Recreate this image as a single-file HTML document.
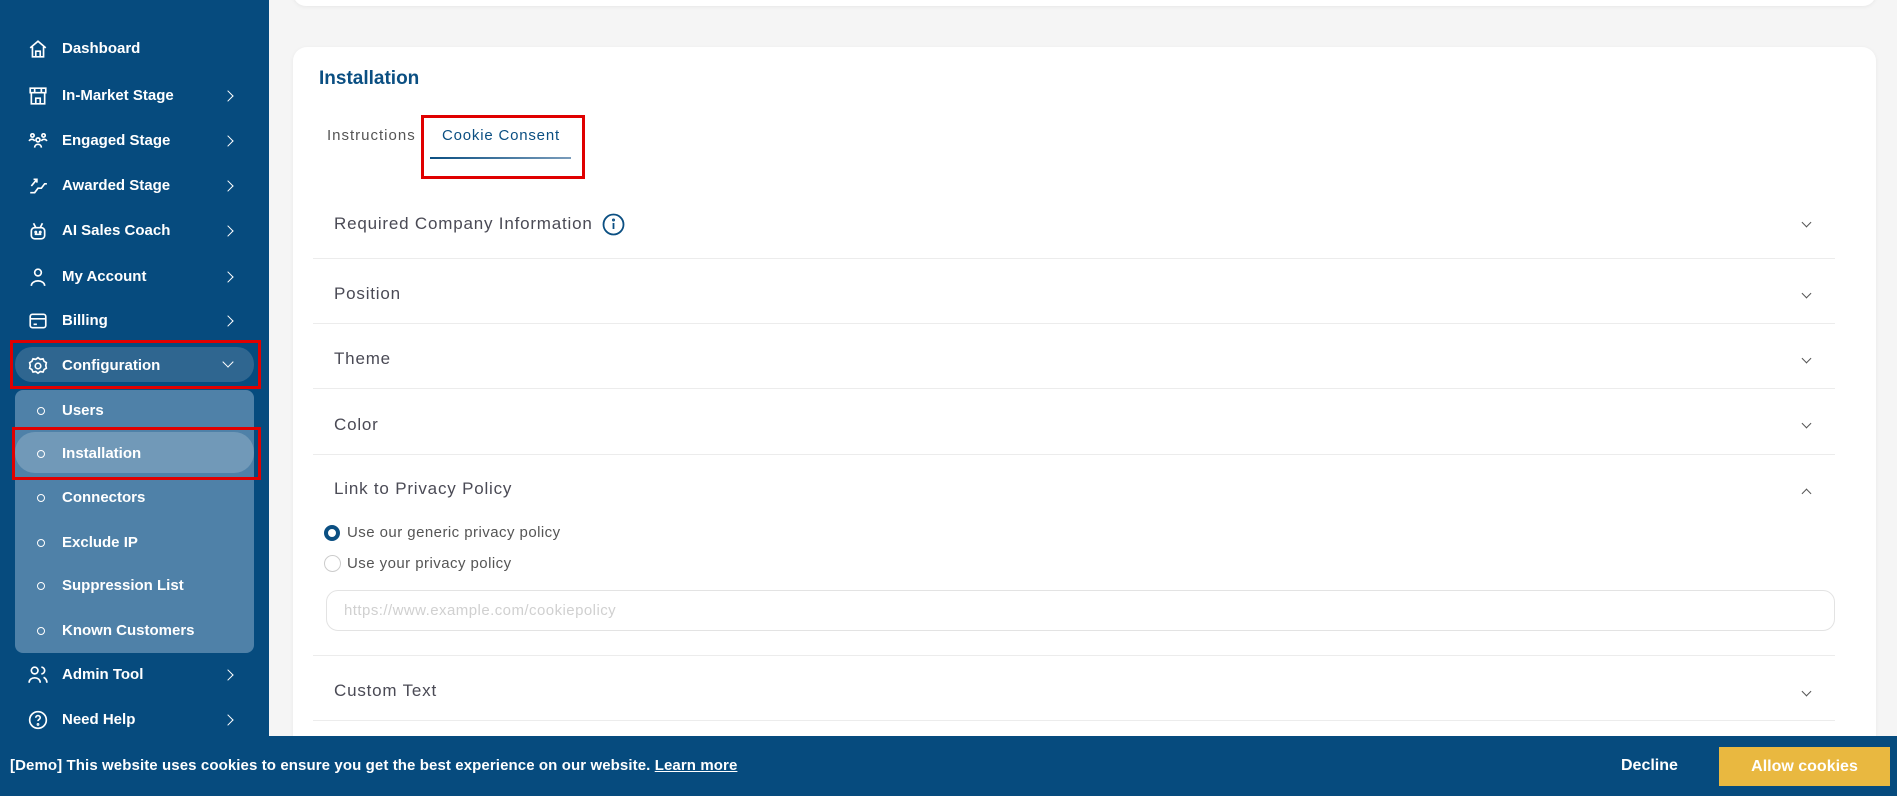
<!DOCTYPE html>
<html><head><meta charset="utf-8"><style>
*{box-sizing:border-box;margin:0;padding:0}
body{width:1897px;height:796px;overflow:hidden;background:#f5f5f5;font-family:"Liberation Sans",sans-serif;position:relative}
.sb{position:absolute;left:0;top:0;width:269px;height:736px;background:#064b7e}
.it{position:absolute;left:0;width:269px;height:30px;color:#fff;font-size:15px;font-weight:bold;line-height:30px}
.it .ic{position:absolute;left:28px;top:5px;width:20px;height:20px}
.it .tx{position:absolute;left:62px}
.it .ch{position:absolute;left:224px;top:11px;width:8px;height:8px;border-right:1.5px solid #fff;border-top:1.5px solid #fff;transform:rotate(45deg)}
.sub{position:absolute;left:15px;top:390px;width:239px;height:263px;background:#4f81a8;border-radius:8px}
.si{position:absolute;left:0;width:269px;height:30px;line-height:30px;color:#fff;font-size:15px;font-weight:bold}
.si .dot{position:absolute;left:37px;top:11px;width:8px;height:8px;border:1.5px solid #fff;border-radius:50%}
.si .tx{position:absolute;left:62px}
.red{position:absolute;border:3px solid #e00000}
.card{position:absolute;background:#fff;border-radius:14px;box-shadow:0 1px 4px rgba(0,0,0,.06)}
.row{position:absolute;left:334px;font-size:17px;color:#4a4a55;letter-spacing:.8px}
.line{position:absolute;left:313px;width:1522px;height:1px;background:#ececec}
.chev{position:absolute;left:1803px;width:7px;height:7px;border-right:1.3px solid #555;border-bottom:1.3px solid #555;transform:rotate(45deg)}
svg{stroke:#fff;fill:none;stroke-width:1.5}
</style></head><body>
<div class="card" style="left:293px;top:-20px;width:1583px;height:26px"></div>
<div class="sb">
<div class="it" style="top:34px"><svg class="ic" viewBox="0 0 18 18"><path d="M2 8L9 2l7 6M4 7v9h10V7M7 16v-5h4v5"/></svg><span class="tx">Dashboard</span></div>
<div class="it" style="top:81px"><svg class="ic" viewBox="0 0 18 18"><path d="M2 2h14v4H2zM3 6v10h12V6M7 16v-5h4v5M6 2v4M12 2v4"/></svg><span class="tx">In-Market Stage</span><span class="ch"></span></div>
<div class="it" style="top:126px"><svg class="ic" viewBox="0 0 18 18"><circle cx="4" cy="4" r="1.5"/><circle cx="14" cy="4" r="1.5"/><circle cx="9" cy="8" r="1.8"/><path d="M1 9c1-2 4-2 5 0M12 9c1-2 4-2 5 0M6 15c0-4 6-4 6 0"/></svg><span class="tx">Engaged Stage</span><span class="ch"></span></div>
<div class="it" style="top:171px"><svg class="ic" viewBox="0 0 18 18"><path d="M2 15h4l3-4h3l3-4h2M3 9l5-6M5 3h3v3"/></svg><span class="tx">Awarded Stage</span><span class="ch"></span></div>
<div class="it" style="top:216px"><svg class="ic" viewBox="0 0 18 18"><rect x="3" y="6" width="12" height="10" rx="3"/><path d="M5 2l2 4M13 2l-2 4M6 12h6"/><circle cx="7" cy="10" r=".6"/><circle cx="11" cy="10" r=".6"/></svg><span class="tx">AI Sales Coach</span><span class="ch"></span></div>
<div class="it" style="top:262px"><svg class="ic" viewBox="0 0 18 18"><circle cx="9" cy="5" r="3"/><path d="M3 17c0-6 12-6 12 0"/></svg><span class="tx">My Account</span><span class="ch"></span></div>
<div class="it" style="top:306px"><svg class="ic" viewBox="0 0 18 18"><rect x="2" y="3" width="14" height="12" rx="2"/><path d="M2 7h14M5 12h3"/></svg><span class="tx">Billing</span><span class="ch"></span></div>
<div style="position:absolute;left:15px;top:347px;width:239px;height:35px;background:#2f6690;border-radius:17px"></div>
<div class="it" style="top:351px"><svg class="ic" viewBox="0 0 18 18"><circle cx="9" cy="9" r="2.5"/><path d="M9 1.5l2 1.5 2.5-.5 1 2.3 2 1.2-.5 2.5.5 2.5-2 1.2-1 2.3-2.5-.5-2 1.5-2-1.5-2.5.5-1-2.3-2-1.2.5-2.5-.5-2.5 2-1.2 1-2.3 2.5.5z"/></svg><span class="tx">Configuration</span><span class="ch" style="transform:rotate(135deg);top:7px"></span></div>
<div class="sub"></div>
<div style="position:absolute;left:15px;top:432px;width:239px;height:41px;background:#7199b8;border-radius:20px"></div>
<div class="si" style="top:396px"><span class="dot"></span><span class="tx">Users</span></div>
<div class="si" style="top:439px"><span class="dot"></span><span class="tx">Installation</span></div>
<div class="si" style="top:483px"><span class="dot"></span><span class="tx">Connectors</span></div>
<div class="si" style="top:528px"><span class="dot"></span><span class="tx">Exclude IP</span></div>
<div class="si" style="top:571px"><span class="dot"></span><span class="tx">Suppression List</span></div>
<div class="si" style="top:616px"><span class="dot"></span><span class="tx">Known Customers</span></div>
<div class="it" style="top:660px"><svg class="ic" viewBox="0 0 18 18"><circle cx="6" cy="5" r="3"/><path d="M1 16c0-6 10-6 10 0M12 2a3 3 0 010 6M14 11c2 1 3 3 3 5"/></svg><span class="tx">Admin Tool</span><span class="ch"></span></div>
<div class="it" style="top:705px"><svg class="ic" viewBox="0 0 18 18"><circle cx="9" cy="9" r="7.5"/><path d="M7 7a2 2 0 114 0c0 1.5-2 1.5-2 3"/><circle cx="9" cy="13" r=".5"/></svg><span class="tx">Need Help</span><span class="ch"></span></div>
</div>
<div class="red" style="left:10px;top:340px;width:251px;height:49px"></div>
<div class="red" style="left:12px;top:427px;width:249px;height:53px"></div>

<div class="card" style="left:293px;top:47px;width:1583px;height:720px"></div>
<div style="position:absolute;left:319px;top:68px;font-size:19px;font-weight:bold;color:#0b4f82">Installation</div>
<div style="position:absolute;left:327px;top:127px;font-size:15px;color:#555;letter-spacing:1px">Instructions</div>
<div style="position:absolute;left:442px;top:127px;font-size:15px;color:#0b4f82;letter-spacing:.8px">Cookie Consent</div>
<div style="position:absolute;left:430px;top:157px;width:141px;height:2px;background:linear-gradient(90deg,#0b4f82,#7a9cbb)"></div>
<div class="red" style="left:421px;top:115px;width:164px;height:64px"></div>

<div class="row" style="top:214px">Required Company Information</div>
<svg style="position:absolute;left:602px;top:213px;stroke:#0b4f82;stroke-width:1.8" width="23" height="23" viewBox="0 0 23 23"><circle cx="11.5" cy="11.5" r="10"/><path d="M11.5 10v6"/><circle cx="11.5" cy="7" r=".6"/></svg>
<span class="chev" style="top:219px"></span>
<div class="line" style="top:258px"></div>
<div class="row" style="top:284px">Position</div><span class="chev" style="top:290px"></span>
<div class="line" style="top:323px"></div>
<div class="row" style="top:349px">Theme</div><span class="chev" style="top:355px"></span>
<div class="line" style="top:388px"></div>
<div class="row" style="top:415px">Color</div><span class="chev" style="top:420px"></span>
<div class="line" style="top:454px"></div>
<div class="row" style="top:479px">Link to Privacy Policy</div><span class="chev" style="top:490px;transform:rotate(-135deg)"></span>
<div style="position:absolute;left:324px;top:525px;width:16px;height:16px;border-radius:50%;border:4.5px solid #0b4f82;background:#fff"></div>
<div style="position:absolute;left:347px;top:524px;font-size:15px;color:#555;letter-spacing:.45px">Use our generic privacy policy</div>
<div style="position:absolute;left:324px;top:555px;width:17px;height:17px;border-radius:50%;border:1px solid #ccc"></div>
<div style="position:absolute;left:347px;top:555px;font-size:15px;color:#555;letter-spacing:.45px">Use your privacy policy</div>
<div style="position:absolute;left:326px;top:590px;width:1509px;height:41px;border:1px solid #e3e3e3;border-radius:12px;font-size:15px;color:#d0d0d0;padding:11px 0 0 17px;letter-spacing:.45px">https://www.example.com/cookiepolicy</div>
<div class="line" style="top:655px"></div>
<div class="row" style="top:681px">Custom Text</div><span class="chev" style="top:688px"></span>
<div class="line" style="top:720px"></div>

<div style="position:absolute;left:0;top:736px;width:1897px;height:60px;background:#064b7e"></div>
<div style="position:absolute;left:10px;top:757px;font-size:15px;font-weight:bold;color:#fff;letter-spacing:.1px">[Demo] This website uses cookies to ensure you get the best experience on our website. <u>Learn more</u></div>
<div style="position:absolute;left:1621px;top:757px;font-size:16px;font-weight:bold;color:#fff">Decline</div>
<div style="position:absolute;left:1719px;top:747px;width:171px;height:39px;background:#e9b840;color:#fff;font-weight:bold;font-size:16px;text-align:center;line-height:39px">Allow cookies</div>
</body></html>
